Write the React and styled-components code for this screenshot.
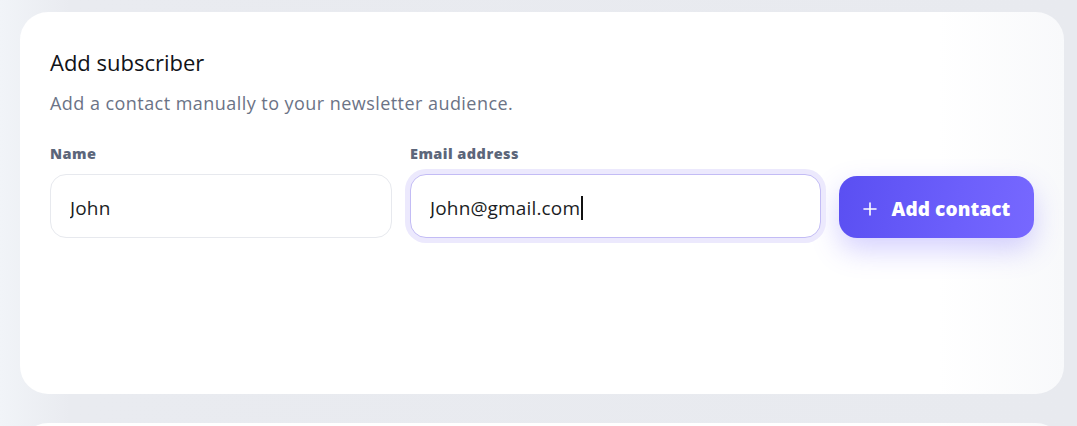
import React, { useState } from 'react';
import styled, { createGlobalStyle } from 'styled-components';

const GlobalStyle = createGlobalStyle`
  html, body {
    margin: 0;
    padding: 0;
  }
  body {
    background: linear-gradient(90deg, #f1f4f8 0px, #e9ebf0 70px, #e8eaef 100%);
    font-family: 'Open Sans', 'Noto Sans', sans-serif;
    overflow: hidden;
  }
`;

const Page = styled('div')`
  box-sizing: border-box;
  width: 1077px;
  height: 426px;
  overflow: hidden;
  padding: 12px 13px 0 20px;
  display: flex;
  flex-direction: column;
  gap: 29px;
`;

const Card = styled('section')`
  box-sizing: border-box;
  background: linear-gradient(90deg, #ffffff 0%, #ffffff 88%, #f8f9fb 100%);
  border-radius: 28px;
  padding: 36px 30px 30px;
  min-height: ${(p) => p.$minHeight || 'auto'};
  flex-shrink: 0;
`;

const Title = styled('h2')`
  margin: 0;
  font-size: 22px;
  font-weight: 400;
  color: #111318;
  line-height: 28px;
`;

const Subtitle = styled('p')`
  margin: 15px 0 0;
  font-size: 18px;
  color: #6b7386;
  line-height: 24px;
  letter-spacing: 0.45px;
`;

const Row = styled('form')`
  margin-top: 31px;
  display: grid;
  grid-template-columns: 342px 411px 195px;
  column-gap: 18px;
  align-items: end;
`;

const Field = styled('label')`
  display: flex;
  flex-direction: column;
  gap: 12px;
`;

const Label = styled('span')`
  font-family: 'Open Sans', 'Noto Sans', sans-serif;
  font-weight: 800;
  font-size: 14.5px;
  line-height: 16px;
  letter-spacing: 0.45px;
  color: #5c667a;
`;

const InputBox = styled('div')`
  position: relative;
`;

const Input = styled('input')`
  box-sizing: border-box;
  display: block;
  height: 64px;
  width: 100%;
  padding: 3px 19px 0;
  border-radius: 16px;
  border: 1px solid ${(p) => (p.$focused ? '#c3bcf5' : '#e7e9ee')};
  box-shadow: ${(p) => (p.$focused ? '0 0 0 5px #ece9fd' : 'none')};
  background: #fff;
  font-family: 'Open Sans', 'Noto Sans', sans-serif;
  font-size: 19px;
  letter-spacing: 0.15px;
  color: #1b1d24;
  outline: none;
  caret-color: transparent;
`;

/* mirrors the value so a steady caret sits right after the text */
const Caret = styled('span')`
  position: absolute;
  left: 20px;
  top: 3px;
  bottom: 0;
  display: flex;
  align-items: center;
  pointer-events: none;
  font-family: 'Open Sans', 'Noto Sans', sans-serif;
  font-size: 19px;
  letter-spacing: 0.15px;
  color: transparent;
  white-space: pre;

  &::after {
    content: '';
    width: 1.5px;
    height: 24px;
    margin-left: 1px;
    background: #111;
  }
`;

const Button = styled('button')`
  height: 62px;
  padding: 3px 0 0;
  border: none;
  border-radius: 18px;
  background: linear-gradient(100deg, #5a4ff2 0%, #6c5ffb 60%, #7768ff 100%);
  box-shadow: 0 12px 28px rgba(104, 90, 250, 0.28);
  color: #fff;
  display: flex;
  align-items: center;
  justify-content: center;
  gap: 15px;
  font-family: 'Open Sans', 'Noto Sans', sans-serif;
  font-weight: 800;
  font-size: 19px;
  letter-spacing: 0.1px;
  cursor: pointer;
`;

const PlusIcon = () => (
  <svg width="14" height="14" viewBox="0 0 14 14" fill="none">
    <path d="M7 1v12M1 7h12" stroke="#fff" strokeWidth="1.6" strokeLinecap="round" />
  </svg>
);

export default function App() {
  const [name, setName] = useState('John');
  const [email, setEmail] = useState('John@gmail.com');

  return (
    <>
      <GlobalStyle />
      <Page>
        <Card $minHeight="382px">
          <Title>Add subscriber</Title>
          <Subtitle>Add a contact manually to your newsletter audience.</Subtitle>
          <Row onSubmit={(e) => e.preventDefault()}>
            <Field>
              <Label>Name</Label>
              <Input value={name} onChange={(e) => setName(e.target.value)} />
            </Field>
            <Field>
              <Label>Email address</Label>
              <InputBox>
                <Input $focused value={email} onChange={(e) => setEmail(e.target.value)} />
                <Caret>{email}</Caret>
              </InputBox>
            </Field>
            <Button type="submit">
              <PlusIcon />
              Add contact
            </Button>
          </Row>
        </Card>
        <Card $minHeight="200px" />
      </Page>
    </>
  );
}
